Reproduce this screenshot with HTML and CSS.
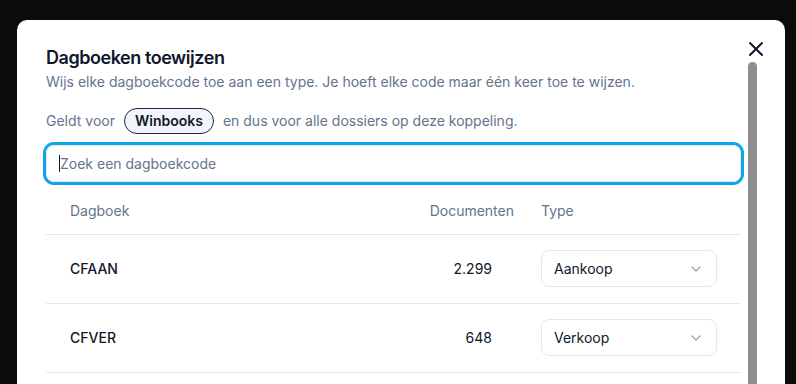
FILE: index.html
```html
<!DOCTYPE html>
<html lang="nl">
<head>
<meta charset="utf-8">
<title>Dagboeken toewijzen</title>
<link rel="stylesheet" href="styles.css">
</head>
<body>
<div class="modal">
  <button class="close" aria-label="Sluiten">
    <svg width="16" height="16" viewBox="0 0 16 16"><path d="M2 2 L14 14 M14 2 L2 14" stroke="#0f172a" stroke-width="2" stroke-linecap="round" fill="none"/></svg>
  </button>
  <div class="content">
    <h1 class="title">Dagboeken toewijzen</h1>
    <p class="subtitle">Wijs elke dagboekcode toe aan een type. Je hoeft elke code maar één keer toe te wijzen.</p>
    <div class="scope">
      <span>Geldt voor</span>
      <span class="pill">Winbooks</span>
      <span>en dus voor alle dossiers op deze koppeling.</span>
    </div>
    <div class="search"><span class="caret"></span><input class="search-input" type="text" placeholder="Zoek een dagboekcode"></div>
    <div class="table">
      <div class="row head">
        <div class="c1">Dagboek</div>
        <div class="c2 h2">Documenten</div>
        <div class="c3">Type</div>
      </div>
      <div class="row">
        <div class="c1 code">CFAAN</div>
        <div class="c2 num">2.299</div>
        <div class="c3"><div class="select"><span>Aankoop</span><svg width="10" height="6" viewBox="0 0 10 6"><path d="M1 1 L5 5 L9 1" stroke="#94a3b8" stroke-width="1.3" fill="none" stroke-linecap="round" stroke-linejoin="round"/></svg></div></div>
      </div>
      <div class="row">
        <div class="c1 code">CFVER</div>
        <div class="c2 num">648</div>
        <div class="c3"><div class="select"><span>Verkoop</span><svg width="10" height="6" viewBox="0 0 10 6"><path d="M1 1 L5 5 L9 1" stroke="#94a3b8" stroke-width="1.3" fill="none" stroke-linecap="round" stroke-linejoin="round"/></svg></div></div>
      </div>
    </div>
  </div>
  <div class="scrollbar"></div>
</div>
</body>
</html>
```
FILE: styles.css
```css
* { box-sizing: border-box; }
html, body { margin: 0; padding: 0; height: 100%; overflow: hidden; }
body {
  background: #0b0b0b;
  font-family: Inter, "Noto Sans", sans-serif;
  color: #0f172a;
  padding-top: 20px;
}
.modal {
  position: relative;
  margin-left: 17px;
  width: 768px;
  height: 420px;
  background: #fff;
  border-radius: 10px 10px 0 0;
  padding: 24px 28px 0 29px;
  display: flex;
  gap: 7px;
}
.content { flex: 1; min-width: 0; }
.scrollbar {
  width: 9px;
  margin-top: 18px;
  background: #8e8e8e;
  border-radius: 5px 5px 0 0;
}
.close {
  position: absolute;
  left: 731px;
  top: 21px;
  width: 16px;
  height: 16px;
  padding: 0;
  border: 0;
  background: transparent;
  display: flex;
}
.title {
  margin: 0;
  font-size: 18px;
  line-height: 28px;
  font-weight: 600;
  letter-spacing: -0.025em;
  color: #0f172a;
}
.subtitle {
  margin: 0;
  font-size: 14px;
  line-height: 20px;
  color: #64748b;
}
.scope {
  margin-top: 16px;
  display: flex;
  align-items: center;
  gap: 9px;
  font-size: 14px;
  line-height: 20px;
  color: #64748b;
}
.pill {
  display: inline-flex;
  align-items: center;
  height: 26px;
  padding: 0 10px;
  border: 1.5px solid #1e293b;
  border-radius: 13px;
  background: #f1f5f9;
  color: #0f172a;
  font-weight: 600;
}
.search {
  position: relative;
  margin-top: 11px;
  height: 37px;
  border: 1px solid #e2e8f0;
  border-radius: 8px;
  box-shadow: 0 0 0 3px #0ea5e9;
  display: flex;
  align-items: center;
}
.caret {
  position: absolute;
  left: 12px;
  top: 9px;
  width: 1px;
  height: 17px;
  background: #0f172a;
}
.search-input {
  flex: 1;
  height: 100%;
  border: 0;
  outline: none;
  background: transparent;
  padding: 0 12px 0 13px;
  font-family: inherit;
  font-size: 14px;
  color: #0f172a;
}
.search-input::placeholder { color: #64748b; opacity: 1; }
.table { margin-top: 10px; font-size: 14px; line-height: 20px; }
.row {
  display: grid;
  grid-template-columns: 1fr 120px 224px;
  align-items: center;
  border-bottom: 1px solid #e2e8f0;
  padding: 15px 0 16px;
}
.row.head { padding: 9px 0 13px; color: #64748b; }
.c1 { padding-left: 24px; }
.c2 { text-align: right; padding-right: 25px; }
.c2.h2 { padding-right: 3px; }
.c3 { padding: 0 24px; }
.code { font-weight: 500; color: #0f172a; }
.num { color: #0f172a; }
.select {
  height: 37px;
  border: 1px solid #e2e8f0;
  border-radius: 8px;
  display: flex;
  align-items: center;
  justify-content: space-between;
  padding: 0 15px 0 12px;
  color: #0f172a;
}
```
